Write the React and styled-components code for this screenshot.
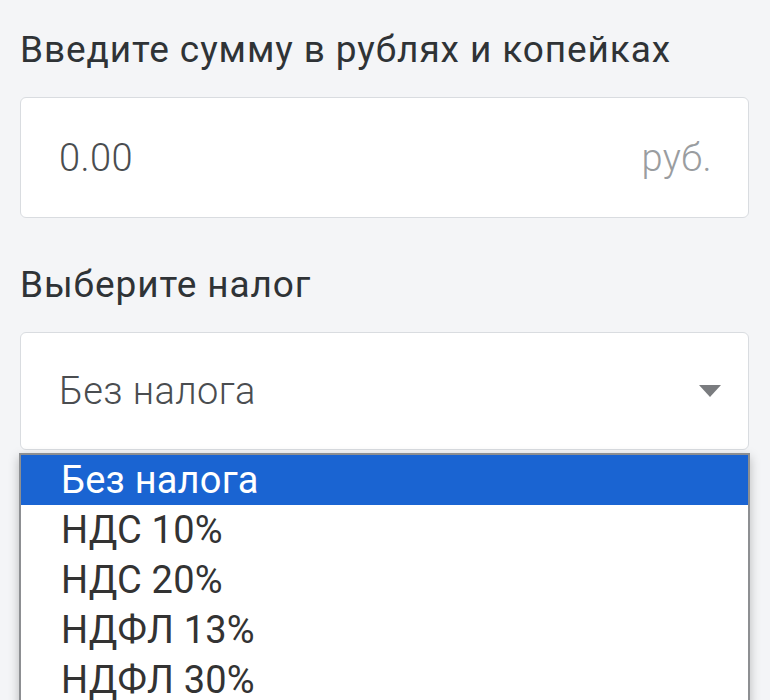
import React from 'react';
import styled, {createGlobalStyle} from 'styled-components';

const GlobalStyle = createGlobalStyle`
  html, body {
    margin: 0;
    padding: 0;
    background: #f4f5f7;
  }
  body {
    font-family: Roboto, "Liberation Sans", sans-serif;
  }
`;

const Page = styled.div`
  width: 770px;
  height: 700px;
  overflow: hidden;
  padding: 0 21px 0 20px;
  box-sizing: border-box;
  background: #f4f5f7;
`;

const Field = styled.div`
  position: relative;
  display: flex;
  flex-direction: column;
  padding-top: ${props => props.top}px;
`;

const Label = styled.div`
  font-size: 37px;
  line-height: 40px;
  letter-spacing: 0.9px;
  color: #2f3336;
  margin-bottom: 27px;
`;

const Box = styled.div`
  height: ${props => props.height}px;
  display: flex;
  align-items: center;
  justify-content: space-between;
  padding: 0 36px 0 38px;
  background: #fff;
  border: 1px solid #d9dce0;
  border-radius: 6px;
  box-sizing: border-box;
  font-size: 38px;
  font-weight: 300;
  letter-spacing: 0.4px;
  color: #4a4d50;
`;

const Unit = styled.span`
  color: #9a9da0;
`;

const Arrow = styled.svg`
  width: 22px;
  height: 12px;
  margin-right: -9px;
`;

const Menu = styled.ul`
  position: absolute;
  left: -1px;
  right: -1px;
  top: calc(100% + 3px);
  margin: 0;
  padding: 0;
  list-style: none;
  background: #fff;
  border: 2px solid #8d8f92;
  border-bottom: none;
  box-shadow: 0 4px 10px rgba(0, 0, 0, 0.25);
`;

const Option = styled.li`
  height: 50px;
  display: flex;
  align-items: center;
  padding-left: 40px;
  font-size: 38px;
  line-height: 1;
  letter-spacing: 0.2px;
  color: ${props => (props.selected ? '#fff' : '#333')};
  background: ${props => (props.selected ? '#1a64d2' : '#fff')};
`;

const taxes = ['Без налога', 'НДС 10%', 'НДС 20%', 'НДФЛ 13%', 'НДФЛ 30%'];

function App() {
  return (
    <Page>
      <GlobalStyle/>
      <Field top={30}>
        <Label>Введите сумму в рублях и копейках</Label>
        <Box height={121}>
          <span>0.00</span>
          <Unit>руб.</Unit>
        </Box>
      </Field>
      <Field top={47}>
        <Label>Выберите налог</Label>
        <div style={{position: 'relative'}}>
          <Box height={118}>
            <span>Без налога</span>
            <Arrow viewBox="0 0 22 12">
              <path d="M0 0 H22 L11 12 Z" fill="#7a7c7f"/>
            </Arrow>
          </Box>
          <Menu>
            {taxes.map((tax, i) => (
                <Option key={tax} selected={i === 0}>{tax}</Option>
            ))}
          </Menu>
        </div>
      </Field>
    </Page>
  );
}

export default App;
